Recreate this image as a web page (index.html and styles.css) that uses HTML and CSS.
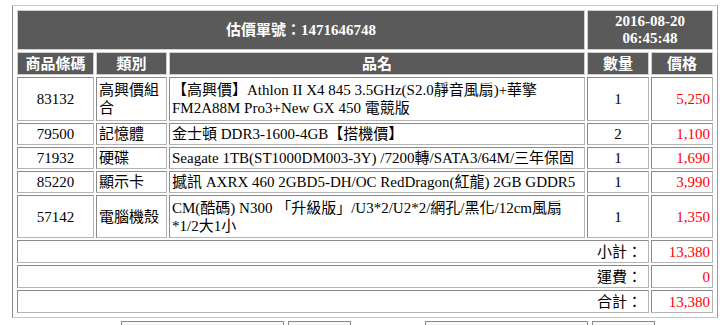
FILE: index.html
```html
<!DOCTYPE html>
<html lang="zh-Hant">
<head>
<meta charset="utf-8">
<title>估價單</title>
<link rel="stylesheet" href="styles.css">
</head>
<body>
<table class="quote">
  <colgroup>
    <col class="c-code"><col class="c-cat"><col class="c-name"><col class="c-qty"><col class="c-price">
  </colgroup>
  <tr class="r-title">
    <th colspan="3" class="title">估價單號：1471646748</th>
    <th colspan="2" class="date">2016-08-20<br>06:45:48</th>
  </tr>
  <tr class="r-head">
    <th>商品條碼</th><th>類別</th><th>品名</th><th>數量</th><th>價格</th>
  </tr>
  <tr class="r-two">
    <td class="code">83132</td>
    <td class="cat">高興價組合</td>
    <td class="name">【高興價】Athlon II X4 845 3.5GHz(S2.0靜音風扇)+華擎FM2A88M Pro3+New GX 450 電競版</td>
    <td class="qty">1</td>
    <td class="price">5,250</td>
  </tr>
  <tr class="r-one">
    <td class="code">79500</td>
    <td class="cat">記憶體</td>
    <td class="name">金士頓 DDR3-1600-4GB【搭機價】</td>
    <td class="qty">2</td>
    <td class="price">1,100</td>
  </tr>
  <tr class="r-one">
    <td class="code">71932</td>
    <td class="cat">硬碟</td>
    <td class="name">Seagate 1TB(ST1000DM003-3Y) /7200轉/SATA3/64M/三年保固</td>
    <td class="qty">1</td>
    <td class="price">1,690</td>
  </tr>
  <tr class="r-one">
    <td class="code">85220</td>
    <td class="cat">顯示卡</td>
    <td class="name">撼訊 AXRX 460 2GBD5-DH/OC RedDragon(紅龍) 2GB GDDR5</td>
    <td class="qty">1</td>
    <td class="price">3,990</td>
  </tr>
  <tr class="r-two r-last">
    <td class="code">57142</td>
    <td class="cat">電腦機殼</td>
    <td class="name">CM(酷碼) N300 「升級版」/U3*2/U2*2/網孔/黑化/12cm風扇 *1/2大1小</td>
    <td class="qty">1</td>
    <td class="price">1,350</td>
  </tr>
  <tr class="r-sum">
    <td colspan="4" class="label">小計：</td>
    <td class="price">13,380</td>
  </tr>
  <tr class="r-sum">
    <td colspan="4" class="label">運費：</td>
    <td class="price">0</td>
  </tr>
  <tr class="r-sum">
    <td colspan="4" class="label">合計：</td>
    <td class="price">13,380</td>
  </tr>
</table>
<div class="actions">
  <span class="btn b-wide"></span>
  <span class="btn b-small"></span>
  <span class="btn b-wide b-gap"></span>
  <span class="btn b-small"></span>
</div>
</body>
</html>
```

FILE: styles.css
```css
html, body {
  margin: 0;
  padding: 0;
  background: #ffffff;
}

body {
  font-family: "Liberation Serif", "Noto Sans CJK TC", serif;
  font-size: 15px;
  color: #000000;
}

.quote {
  margin: 5px 0 0 12px;
  width: 706px;
  table-layout: fixed;
  border-collapse: separate;
  border-spacing: 2px;
  padding: 2px;
  border-style: solid;
  border-width: 1px;
  border-color: #c8c8c8 #9a9a9a #c8c8c8 #8a8a8a;
}

.c-code { width: 77px; }
.c-cat { width: 71px; }
.c-name { width: 416px; }
.c-qty { width: 62px; }
.c-price { width: 62px; }

th, td {
  box-sizing: border-box;
  padding: 0 2px;
  line-height: 18px;
}

th {
  background: #5a5a5a;
  color: #ffffff;
  font-weight: bold;
  text-align: center;
  border: 1px solid #cfcfcf;
}

td {
  border-style: solid;
  border-width: 1px;
  border-color: #8a8a8a #b4b4b4 #b4b4b4 #8a8a8a;
  vertical-align: middle;
}

.r-title th { height: 40px; }
.title { font-size: 15px; }
.date { font-size: 15px; line-height: 17px; }
.r-head th { height: 23px; }
.r-two td { height: 44px; }
.r-last td { height: 43px; }
.r-one td { height: 22px; }
.r-sum td { height: 23px; }

.code, .qty { text-align: center; }
.cat, .name { text-align: left; }
.price { text-align: right; color: #ff0000; }
.label { text-align: right; padding-right: 6px; }

.actions {
  display: flex;
  margin-top: 3px;
  padding-left: 121px;
  gap: 4px;
}

.btn {
  display: block;
  box-sizing: border-box;
  height: 26px;
  border: 1px solid #8a8a8a;
  background: #f7f7f7;
}

.b-wide { width: 163px; }
.b-small { width: 63px; }
.b-gap { margin-left: 70px; }
```
